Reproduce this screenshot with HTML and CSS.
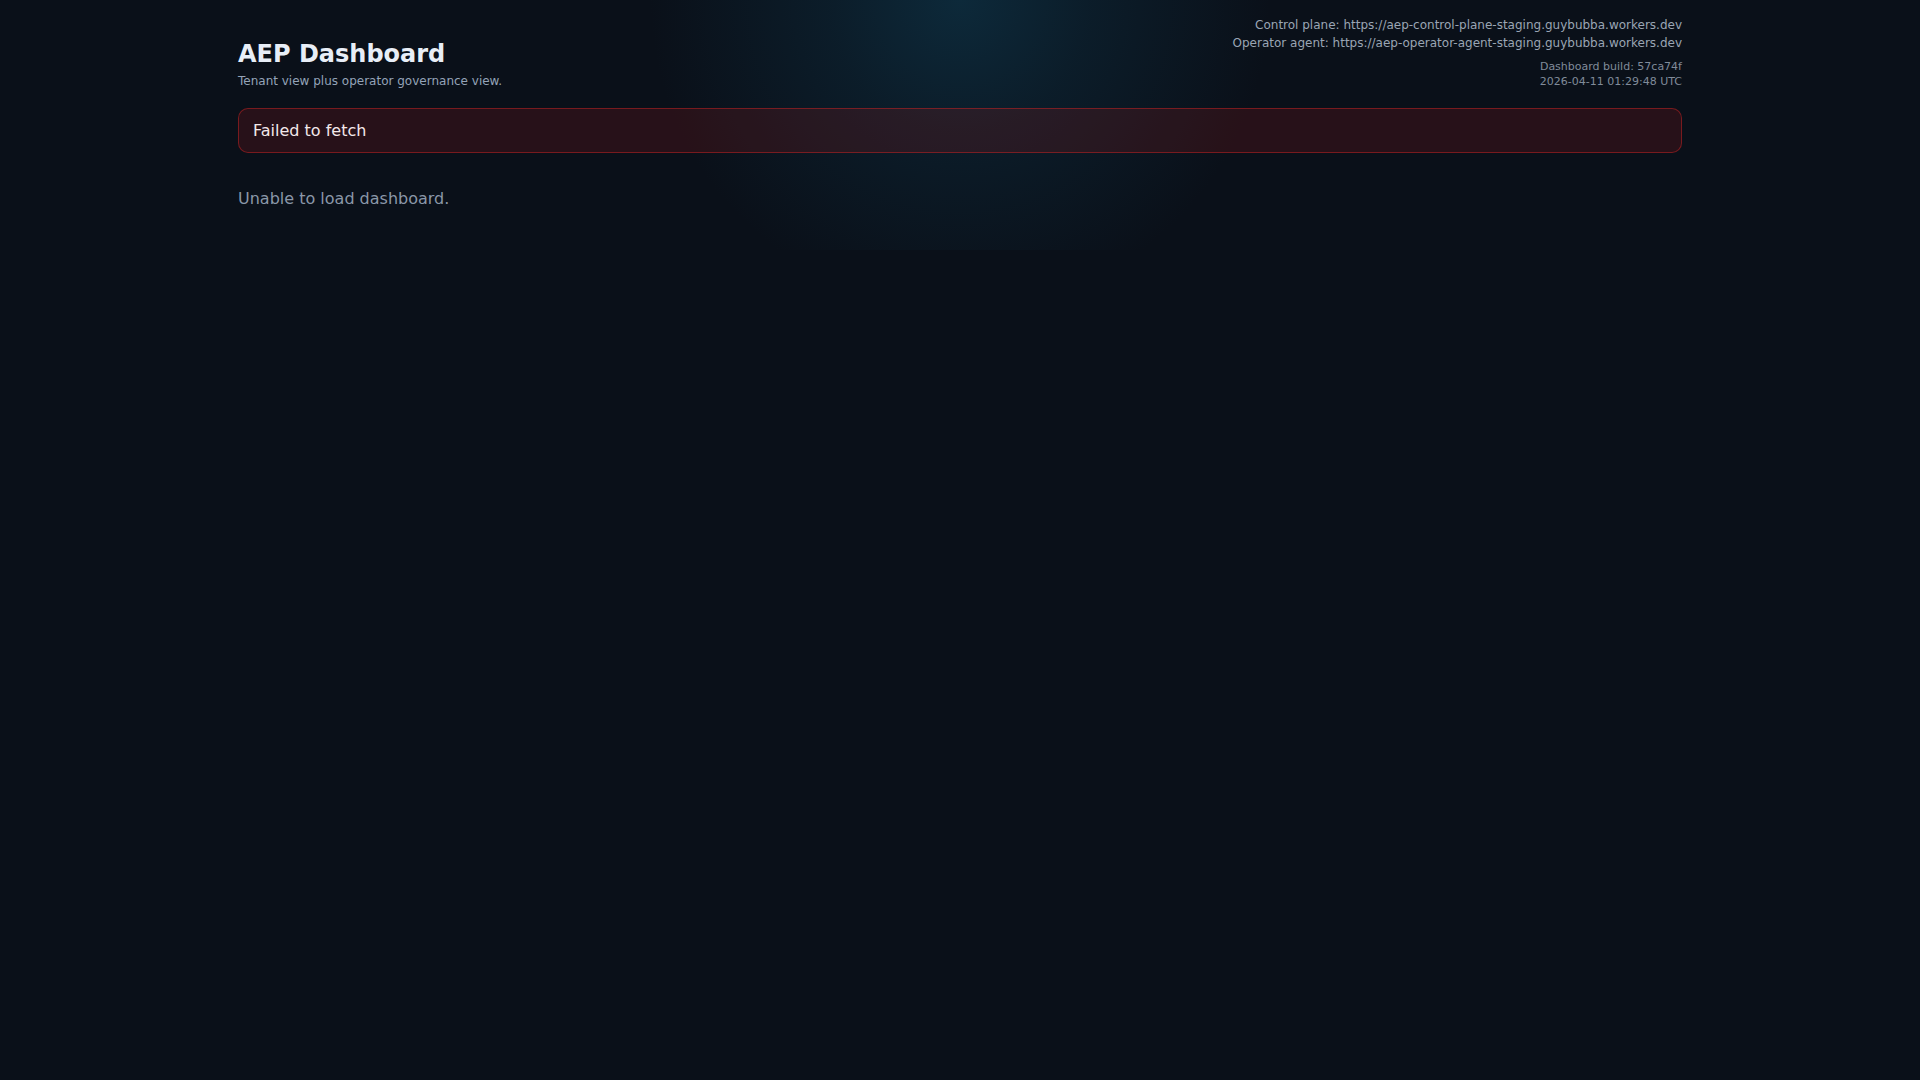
FILE: index.html
```html
<!DOCTYPE html>
<html lang="en">
<head>
<meta charset="utf-8">
<title>AEP Dashboard</title>
<link rel="stylesheet" href="styles.css">
</head>
<body>
<main class="page">
  <header class="header">
    <div class="brand">
      <h1 class="title">AEP Dashboard</h1>
      <p class="subtitle">Tenant view plus operator governance view.</p>
    </div>
    <div class="meta">
      <div class="endpoints">
        <div>Control plane: https://aep-control-plane-staging.guybubba.workers.dev</div>
        <div>Operator agent: https://aep-operator-agent-staging.guybubba.workers.dev</div>
      </div>
      <div class="build">
        <div>Dashboard build: 57ca74f</div>
        <div>2026-04-11 01:29:48 UTC</div>
      </div>
    </div>
  </header>
  <div class="error">Failed to fetch</div>
  <p class="empty">Unable to load dashboard.</p>
</main>
</body>
</html>
```

FILE: styles.css
```css
html {
  background-color: #0a1019;
  background-image: radial-gradient(circle at 50% 0, rgba(14, 52, 72, 0.7) 0, rgba(14, 52, 72, 0.35) 130px, rgba(14, 52, 72, 0) 310px);
  background-size: 100% 250px;
  background-repeat: no-repeat;
  min-height: 100%;
}

body {
  margin: 0;
  font-family: "DejaVu Sans", "Noto Sans", sans-serif;
  color: #e8eef7;
}

.page {
  max-width: 1444px;
  margin: 0 auto;
  padding-top: 16px;
}

.header {
  display: flex;
  justify-content: space-between;
  align-items: flex-end;
}

.brand {
  padding-bottom: 1px;
}

.title {
  margin: 0 0 6px;
  font-size: 24px;
  font-weight: 700;
  line-height: normal;
  color: #e8eef7;
}

.subtitle {
  margin: 0;
  font-size: 12px;
  line-height: 14px;
  color: #94a3b8;
}

.meta {
  display: flex;
  flex-direction: column;
  align-items: flex-end;
  gap: 7px;
  text-align: right;
}

.endpoints {
  font-size: 12px;
  line-height: 18px;
  color: #9aa5b4;
}

.build {
  font-size: 11px;
  line-height: 15px;
  color: #808b9a;
}

.error {
  margin-top: 19px;
  padding: 12px 14px;
  border: 1px solid rgba(220, 38, 38, 0.45);
  border-radius: 10px;
  background: rgba(153, 27, 27, 0.2);
  font-size: 16px;
  line-height: normal;
  color: #f3e8ea;
}

.empty {
  margin: 36px 0 0;
  font-size: 16px;
  line-height: normal;
  color: #8a97a8;
}
```
